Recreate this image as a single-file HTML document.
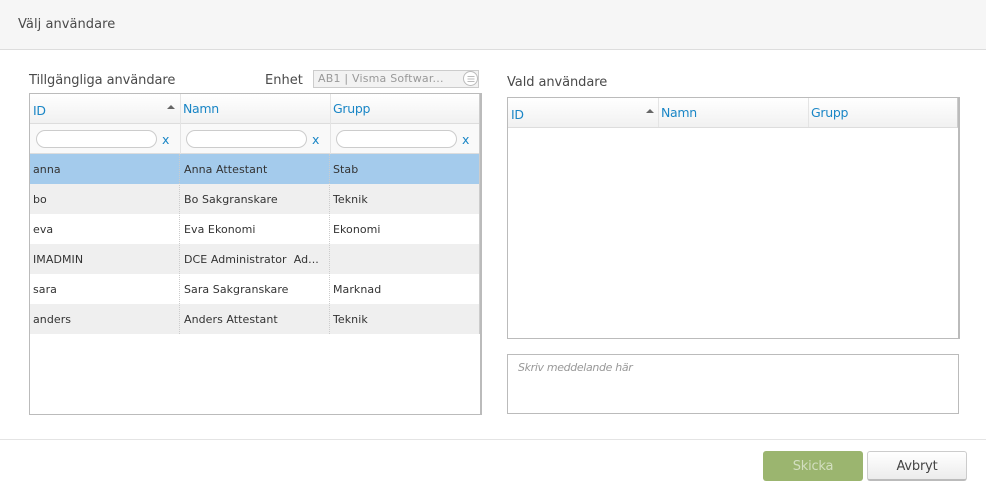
<!DOCTYPE html>
<html lang="sv"><head><meta charset="utf-8"><title>Välj användare</title>
<style>
html,body{margin:0;padding:0;background:#fff}
body{width:986px;height:490px;position:relative;overflow:hidden;font-family:"DejaVu Sans","Liberation Sans",sans-serif;color:#444}
div,span{position:absolute;box-sizing:border-box;white-space:nowrap}
.t{font-size:13px;letter-spacing:-.08px;line-height:18px;color:#4a4a4a}
.h{font-size:12.5px;letter-spacing:-.3px;line-height:16px;color:#1a86c6}
.c{font-size:11px;letter-spacing:.06px;line-height:16px;color:#333}
.head{background:linear-gradient(#fff,#f1f1f1)}
.i{width:121px;height:18px;border:1px solid #ccc;border-radius:9px;background:#fff;top:130px}
.x{font-size:12.5px;line-height:16px;color:#1a86c6;top:132px}
.row{left:30px;width:449px;height:30px}
.v{width:0;height:30px;border-left:1px dotted #ccc}
</style></head><body>
<div style="left:0;top:0;width:986px;height:50px;background:#f6f6f6;border-bottom:1px solid #ddd"></div>
<div class="t" style="left:18px;top:16px;letter-spacing:.05px">Välj användare</div>

<div class="t" style="left:29px;top:72px">Tillgängliga användare</div>
<div class="t" style="left:265px;top:72px;letter-spacing:0">Enhet</div>
<div style="left:313px;top:70px;width:166px;height:18px;background:#f2f2f2;border:1px solid #ccc"></div>
<div class="c" style="left:318px;top:71px;color:#999;letter-spacing:.2px">AB1 | Visma Softwar...</div>
<div style="left:463px;top:71px;width:15px;height:15px;border-radius:50%;border:1px solid #bbb;background:#fff"></div>
<svg style="position:absolute;left:463px;top:71px" width="16" height="16"><path d="M4.500 5.500h7M4.500 8h7M4.500 10.500h7" stroke="#bbb" fill="none"/></svg>

<!-- left table -->
<div style="left:29px;top:93px;width:453px;height:322px;border:1px solid #bbb;border-right-width:2px;background:#fff"></div>
<div class="head" style="left:30px;top:94px;width:449px;height:30px;border-bottom:1px solid #ddd"></div>
<div style="left:30px;top:124px;width:449px;height:30px;background:#f9f9f9;border-bottom:1px solid #ddd"></div>
<div style="left:180px;top:94px;width:1px;height:60px;background:#e4e4e4"></div>
<div style="left:330px;top:94px;width:1px;height:60px;background:#e4e4e4"></div>
<div style="left:479px;top:94px;width:1px;height:240px;background:#ccc"></div>
<div class="h" style="left:33px;top:103px">ID</div>
<svg style="position:absolute;left:167px;top:104px" width="8" height="5"><path d="M0 5L4 1L8 5Z" fill="#666"/></svg>
<div class="h" style="left:183px;top:101px">Namn</div>
<div class="h" style="left:333px;top:101px">Grupp</div>
<div class="i" style="left:36px"></div><div class="x" style="left:162px">x</div>
<div class="i" style="left:186px"></div><div class="x" style="left:312px">x</div>
<div class="i" style="left:336px"></div><div class="x" style="left:462px">x</div>

<div class="row" style="top:154px;background:#a4cbec"></div>
<div class="row" style="top:184px;background:#efefef"></div>
<div class="row" style="top:244px;background:#efefef"></div>
<div class="row" style="top:304px;background:#efefef"></div>
<div class="v" style="left:179px;top:154px;height:180px"></div>
<div class="v" style="left:329px;top:154px;height:180px"></div>

<div class="c" style="left:33px;top:162px">anna</div><div class="c" style="left:184px;top:162px">Anna Attestant</div><div class="c" style="left:333px;top:162px">Stab</div>
<div class="c" style="left:33px;top:192px">bo</div><div class="c" style="left:184px;top:192px">Bo Sakgranskare</div><div class="c" style="left:333px;top:192px">Teknik</div>
<div class="c" style="left:33px;top:222px">eva</div><div class="c" style="left:184px;top:222px">Eva Ekonomi</div><div class="c" style="left:333px;top:222px">Ekonomi</div>
<div class="c" style="left:33px;top:252px">IMADMIN</div><div class="c" style="left:184px;top:252px">DCE Administrator&nbsp; Ad...</div>
<div class="c" style="left:33px;top:282px">sara</div><div class="c" style="left:184px;top:282px">Sara Sakgranskare</div><div class="c" style="left:333px;top:282px">Marknad</div>
<div class="c" style="left:33px;top:312px">anders</div><div class="c" style="left:184px;top:312px">Anders Attestant</div><div class="c" style="left:333px;top:312px">Teknik</div>

<!-- right table -->
<div class="t" style="left:507px;top:74px">Vald användare</div>
<div style="left:507px;top:97px;width:453px;height:242px;border:1px solid #bbb;border-right-width:2px;background:#fff"></div>
<div class="head" style="left:508px;top:98px;width:450px;height:30px;border-bottom:1px solid #ddd;border-right:1px solid #ccc"></div>
<div style="left:658px;top:98px;width:1px;height:29px;background:#e4e4e4"></div>
<div style="left:808px;top:98px;width:1px;height:29px;background:#e4e4e4"></div>
<div class="h" style="left:511px;top:107px">ID</div>
<svg style="position:absolute;left:646px;top:108px" width="8" height="5"><path d="M0 5L4 1L8 5Z" fill="#666"/></svg>
<div class="h" style="left:661px;top:105px">Namn</div>
<div class="h" style="left:811px;top:105px">Grupp</div>

<div style="left:507px;top:354px;width:452px;height:60px;border:1px solid #bbb;background:#fff"></div>
<div class="c" style="left:518px;top:360px;font-style:italic;color:#999;letter-spacing:-.35px">Skriv meddelande här</div>

<!-- footer -->
<div style="left:0;top:439px;width:986px;height:1px;background:#e4e4e4"></div>
<div style="left:763px;top:451px;width:100px;height:30px;background:#9bb56f;border-radius:3px;color:#d3dfc0;font-size:13px;letter-spacing:-.2px;line-height:31px;text-align:center">Skicka</div>
<div style="left:867px;top:451px;width:100px;height:30px;background:linear-gradient(#fff,#ececec);border:1px solid #ccc;border-bottom:2px solid #bbb;border-radius:3px;color:#444;font-size:13px;letter-spacing:-.2px;line-height:29px;text-align:center">Avbryt</div>
</body></html>
